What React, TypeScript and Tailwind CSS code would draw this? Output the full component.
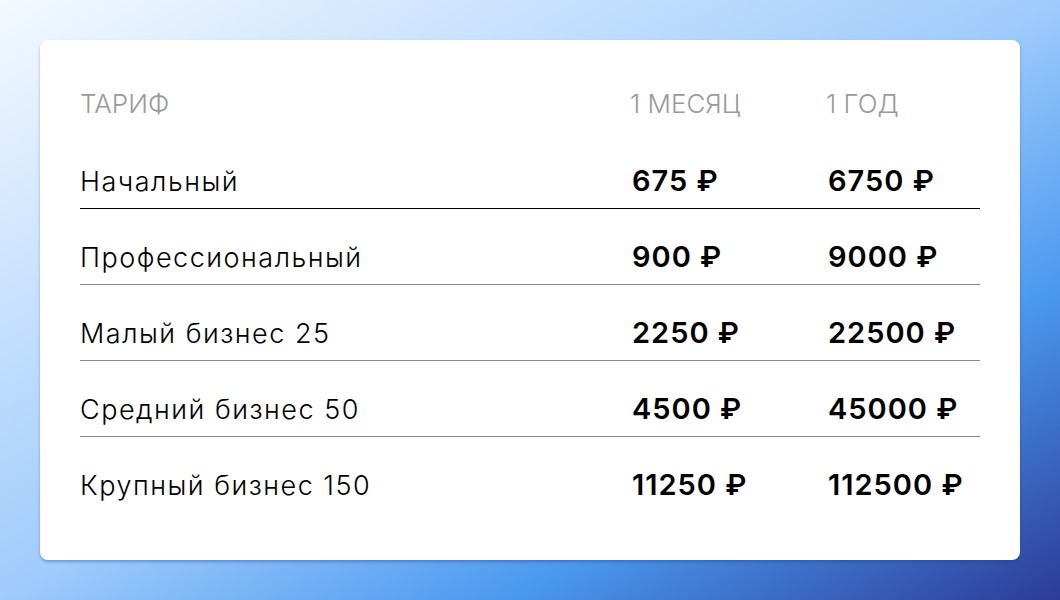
import React from "react";

const rows = [
  { name: "Начальный", m: "675 ₽", y: "6750 ₽" },
  { name: "Профессиональный", m: "900 ₽", y: "9000 ₽" },
  { name: "Малый бизнес 25", m: "2250 ₽", y: "22500 ₽" },
  { name: "Средний бизнес 50", m: "4500 ₽", y: "45000 ₽" },
  { name: "Крупный бизнес 150", m: "11250 ₽", y: "112500 ₽" },
];

export default function App() {
  return (
    <div
      className="w-[1060px] h-[600px] p-10 bg-[linear-gradient(to_bottom_right,#f4f9ff_0%,#9fcbfb_50%,#4a98ef_74%,#2d3b96_100%)]"
      style={{ fontFamily: "Inter, 'Noto Sans', sans-serif" }}
    >
      <div className="h-[520px] bg-white rounded-lg shadow-[0_2px_3px_rgba(20,60,140,0.35)] px-10 pt-10">
        <div className="flex h-[53px] items-start text-[26px] leading-[48px] font-light text-[#9a9a9a]">
          <div className="w-[550px]">ТАРИФ</div>
          <div className="w-[196px]">1 МЕСЯЦ</div>
          <div>1 ГОД</div>
        </div>
        {rows.map((r, i) => (
          <div
            key={i}
            className={`flex h-[76px] items-baseline pt-[36px] leading-[24px] text-black ${
              i === 0 ? "border-b border-black" : i < 4 ? "border-b border-[#8a8a8a]" : ""
            }`}
          >
            <div className="w-[552px] text-[27px] font-light tracking-[1.5px]">{r.name}</div>
            <div className="w-[196px] text-[29px] font-semibold tracking-[1px]">{r.m}</div>
            <div className="text-[29px] font-semibold tracking-[1px]">{r.y}</div>
          </div>
        ))}
      </div>
    </div>
  );
}
